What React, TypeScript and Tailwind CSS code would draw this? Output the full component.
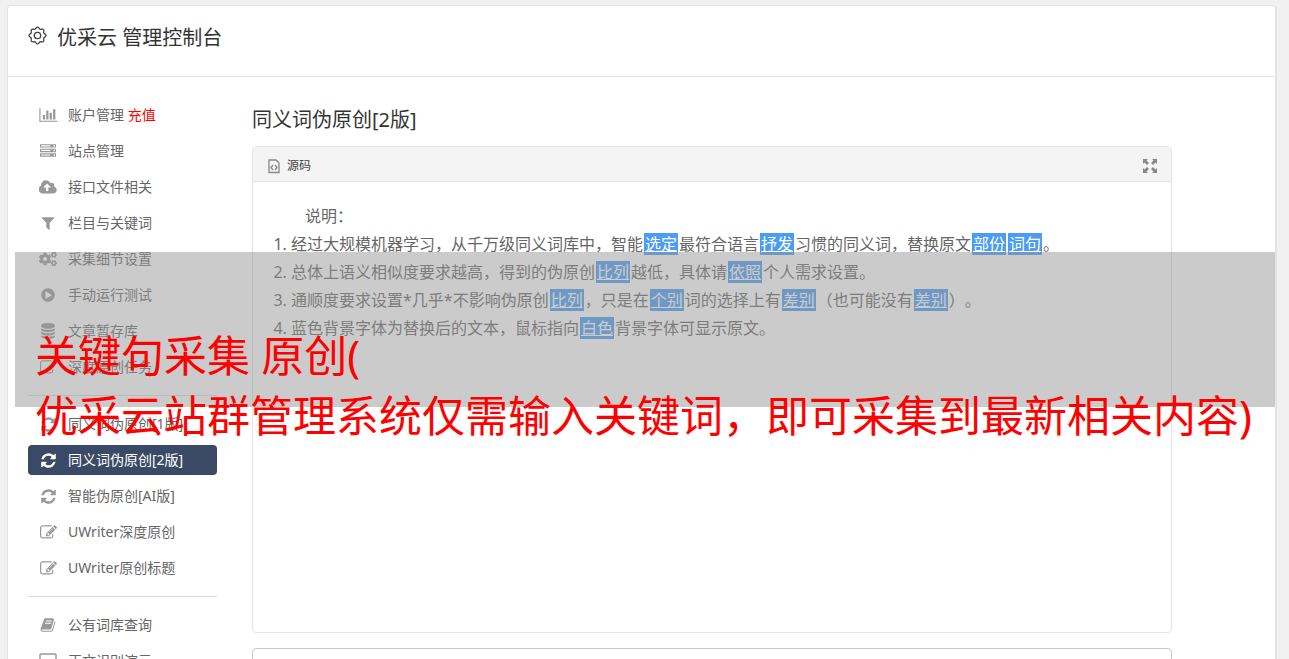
import type { ReactNode } from 'react';
import { FaCogs, FaPlayCircle } from 'react-icons/fa';

interface GlyphProps {
  d: string;
  viewBox?: string;
  width?: number;
  height?: number;
}

function Glyph({ d, viewBox = '0 0 1792 1792', width = 17, height = 17 }: GlyphProps) {
  return (
    <svg viewBox={viewBox} width={width} height={height} fill="currentColor" aria-hidden="true">
      <path d={d} />
    </svg>
  );
}

const paths = {
  chart:
    'M640 896v512h-256v-512h256zm384-512v1024h-256v-1024h256zm1024 1152v128h-2048v-1536h128v1408h1920zm-640-896v768h-256v-768h256zm384-384v1152h-256v-1152h256z',
  server:
    'M128 1408h1024v-128h-1024v128zm0-512h1024v-128h-1024v128zm1568 448q0-40-28-68t-68-28-68 28-28 68 28 68 68 28 68-28 28-68zm-1568-960h1024v-128h-1024v128zm1568 448q0-40-28-68t-68-28-68 28-28 68 28 68 68 28 68-28 28-68zm0-512q0-40-28-68t-68-28-68 28-28 68 28 68 68 28 68-28 28-68zm96 832v384h-1792v-384h1792zm0-512v384h-1792v-384h1792zm0-512v384h-1792v-384h1792z',
  cloud:
    'M1216 864q0-14-9-23l-352-352q-9-9-23-9t-23 9l-351 351q-10 12-10 24 0 14 9 23t23 9h224v352q0 13 9.5 22.5t22.5 9.5h192q13 0 22.5-9.5t9.5-22.5v-352h224q13 0 22.5-9.5t9.5-22.5zm640 288q0 159-112.5 271.5t-271.5 112.5h-1088q-185 0-316.5-131.5t-131.5-316.5q0-130 70-240t188-165q-2-30-2-43 0-212 150-362t362-150q156 0 285.5 87t188.5 231q71-62 166-62 106 0 181 75t75 181q0 76-41 138 130 31 213.5 135.5t83.5 238.5z',
  filter:
    'M1595 295q17 41-14 70l-493 493v742q0 42-39 59-13 5-25 5-27 0-45-19l-256-256q-19-19-19-45v-486l-493-493q-31-29-14-70 17-39 59-39h1280q42 0 59 39z',
  database:
    'M896 768q237 0 443-43t325-127v170q0 69-103 128t-280 93.5-385 34.5-385-34.5-280-93.5-103-128v-170q119 84 325 127t443 43zm0 768q237 0 443-43t325-127v170q0 69-103 128t-280 93.5-385 34.5-385-34.5-280-93.5-103-128v-170q119 84 325 127t443 43zm0-384q237 0 443-43t325-127v170q0 69-103 128t-280 93.5-385 34.5-385-34.5-280-93.5-103-128v-170q119 84 325 127t443 43zm0-1152q208 0 385 34.5t280 93.5 103 128v128q0 69-103 128t-280 93.5-385 34.5-385-34.5-280-93.5-103-128v-128q0-69 103-128t280-93.5 385-34.5z',
  edit:
    'M888 1184l116-116-152-152-116 116v56h96v96h56zm440-720q-16-16-33 1l-350 350q-17 17-1 33t33-1l350-350q17-17 1-33zm80 594v190q0 119-84.5 203.5t-203.5 84.5h-832q-119 0-203.5-84.5t-84.5-203.5v-832q0-119 84.5-203.5t203.5-84.5h832q63 0 117 25 15 7 18 23 3 17-9 29l-49 49q-14 14-32 8-23-6-45-6h-832q-66 0-113 47t-47 113v832q0 66 47 113t113 47h832q66 0 113-47t47-113v-126q0-13 9-22l64-64q15-15 35-7t20 29zm-96-738l288 288-672 672h-288v-288zm444 132l-92 92-288-288 92-92q28-28 68-28t68 28l152 152q28 28 28 68t-28 68z',
  refresh:
    'M1639 1056q0 5-1 7-64 268-268 434.5t-478 166.5q-146 0-282.5-55t-243.5-157l-129 129q-19 19-45 19t-45-19-19-45v-448q0-26 19-45t45-19h448q26 0 45 19t19 45-19 45l-137 137q71 66 161 102t187 36q134 0 250-65t186-179q11-17 53-117 8-23 30-23h192q13 0 22.5 9.5t9.5 22.5zm25-800v448q0 26-19 45t-45 19h-448q-26 0-45-19t-19-45 19-45l138-138q-148-137-349-137-134 0-250 65t-186 179q-11 17-53 117-8 23-30 23h-199q-13 0-22.5-9.5t-9.5-22.5v-7q65-268 270-434.5t480-166.5q146 0 284 55.5t245 156.5l130-129q19-19 45-19t45 19 19 45z',
  book:
    'M1703 478q40 57 18 129l-275 906q-19 64-76.5 107.5t-122.5 43.5h-923q-77 0-148.5-53.5t-99.5-131.5q-24-67-2-127 0-4 3-27t4-37q1-8-3-21.5t-3-19.5q2-11 8-21t16.5-23.5 16.5-23.5q23-38 45-91.5t30-91.5q3-10 .5-30t-.5-28q3-11 17-28t17-23q21-36 42-92t25-90q1-9-2.5-32t.5-28q4-13 22-30.5t22-22.5q19-26 42.5-84.5t27.5-96.5q1-8-3-25.5t-2-26.5q2-8 9-18t18-23 17-21q8-12 16.5-30.5t15-35 16-36 19.5-32 26.5-23.5 36-11.5 47.5 5.5l-1 3q38-9 51-9h761q74 0 114 56t18 130l-274 906q-36 119-71.5 153.5t-128.5 34.5h-869q-27 0-38 15-11 16-1 43 24 70 144 70h923q29 0 56-15.5t35-41.5l300-987q7-22 5-57 38 15 59 43zm-1064 2q-4 13 2 22.5t20 9.5h608q13 0 25.5-9.5t16.5-22.5l21-64q4-13-2-22.5t-20-9.5h-608q-13 0-25.5 9.5t-16.5 22.5zm-83 256q-4 13 2 22.5t20 9.5h608q13 0 25.5-9.5t16.5-22.5l21-64q4-13-2-22.5t-20-9.5h-608q-13 0-25.5 9.5t-16.5 22.5z',
};

interface NavItem {
  label: string;
  icon: ReactNode;
  note?: string;
  active?: boolean;
}

const refresh = <Glyph d={paths.refresh} />;
const edit = <Glyph d={paths.edit} />;

const navGroups: NavItem[][] = [
  [
    {
      label: '账户管理',
      note: '充值',
      icon: <Glyph d={paths.chart} viewBox="0 0 2048 1792" width={19} height={16} />,
    },
    { label: '站点管理', icon: <Glyph d={paths.server} width={16} height={16} /> },
    { label: '接口文件相关', icon: <Glyph d={paths.cloud} viewBox="-32 0 1920 1792" width={18} height={17} /> },
    { label: '栏目与关键词', icon: <Glyph d={paths.filter} width={16} height={16} /> },
    { label: '采集细节设置', icon: <FaCogs size={18} /> },
    { label: '手动运行测试', icon: <FaPlayCircle size={14} /> },
    { label: '文章暂存库', icon: <Glyph d={paths.database} width={16} height={16} /> },
    { label: '深度原创任务', icon: edit },
  ],
  [
    { label: '同义词伪原创[1版]', icon: refresh },
    { label: '同义词伪原创[2版]', icon: refresh, active: true },
    { label: '智能伪原创[AI版]', icon: refresh },
    { label: 'UWriter深度原创', icon: edit },
    { label: 'UWriter原创标题', icon: edit },
  ],
  [
    { label: '公有词库查询', icon: <Glyph d={paths.book} width={16} height={16} /> },
    {
      label: '正文识别演示',
      icon: (
        <svg width="18" height="16" fill="none" stroke="currentColor" strokeWidth="1.5" aria-hidden="true">
          <rect x="1" y="1" width="16" height="11" rx="1" />
          <path d="M6 15h6" />
        </svg>
      ),
    },
  ],
];

function GearIcon() {
  const points = Array.from({ length: 96 }, (_, i) => {
    const a = (i / 96) * Math.PI * 2;
    const r = 7.6 + 0.8 * Math.cos(a * 8);
    return `${(9.5 + r * Math.cos(a)).toFixed(2)},${(9.5 + r * Math.sin(a)).toFixed(2)}`;
  }).join(' ');
  return (
    <svg width="19" height="19" fill="none" stroke="#444" strokeWidth="1.3" strokeLinejoin="round" aria-hidden="true">
      <polygon points={points} />
      <circle cx="9.5" cy="9.5" r="3.2" />
    </svg>
  );
}

function Swap({ children }: { children: ReactNode }) {
  return <span className="mx-px bg-[#4a9cf5] px-px text-white underline">{children}</span>;
}

function Sidebar() {
  return (
    <nav className="w-[189px] shrink-0 divide-y divide-[#dcdcdc]">
      {navGroups.map((group, i) => (
        <ul key={i} className="flex flex-col gap-[6px] py-[13px] first:pt-0">
          {group.map((item) => (
            <li key={item.label}>
              <a
                href="#"
                className={
                  item.active
                    ? 'flex h-[30px] items-center gap-[10px] rounded bg-[#3a4a66] px-[10px] text-white'
                    : 'flex h-[30px] items-center gap-[10px] rounded px-[10px] text-[#666]'
                }
              >
                <span className={item.active ? 'flex w-5 justify-center' : 'flex w-5 justify-center text-[#999]'}>
                  {item.icon}
                </span>
                <span>
                  {item.label}
                  {item.note && <span className="text-[#f00]"> {item.note}</span>}
                </span>
              </a>
            </li>
          ))}
        </ul>
      ))}
    </nav>
  );
}

function Editor() {
  return (
    <section className="h-[487px] rounded border border-[#e4e4e4]">
      <div className="flex h-[35px] items-center justify-between rounded-t border-b border-[#e4e4e4] bg-[#f4f4f4] px-[14px] pt-[3px]">
        <button type="button" className="flex items-center gap-[6px] text-xs text-[#444]">
          <svg width="14" height="16" fill="none" stroke="#888" strokeWidth="1.3" aria-hidden="true">
            <path d="M2 2h7l3 3v9.5H2z" />
            <path d="M6 7L4 9.500l2 2.500M8 7l2 2.500L8 12" />
          </svg>
          源码
        </button>
        <button type="button" aria-label="全屏">
          <svg width="14" height="14" viewBox="0 0 14 14" fill="#888" aria-hidden="true">
            <path d="M0 0h5L3.500 1.500 6 4 4 6 1.500 3.500 0 5z" />
            <path d="M14 0v5l-1.500-1.500L10 6 8 4l2.500-2.500L9 0z" />
            <path d="M0 14V9l1.500 1.500L4 8l2 2-2.500 2.500L5 14z" />
            <path d="M14 14H9l1.500-1.500L8 10l2-2 2.500 2.500L14 9z" />
          </svg>
        </button>
      </div>
      <div className="px-5 py-5 text-base leading-7 text-[#666]">
        <p className="indent-8">说明：</p>
        <ol className="list-decimal pl-[18px]">
          <li>
            经过大规模机器学习，从千万级同义词库中，智能<Swap>选定</Swap>最符合语言<Swap>抒发</Swap>
            习惯的同义词，替换原文<Swap>部份</Swap><Swap>词句</Swap>。
          </li>
          <li>
            总体上语义相似度要求越高，得到的伪原创<Swap>比列</Swap>越低，具体请<Swap>依照</Swap>个人需求设置。
          </li>
          <li>
            通顺度要求设置*几乎*不影响伪原创<Swap>比列</Swap>，只是在<Swap>个别</Swap>词的选择上有
            <Swap>差别</Swap>（也可能没有<Swap>差别</Swap>）。
          </li>
          <li>
            蓝色背景字体为替换后的文本，鼠标指向<Swap>白色</Swap>背景字体可显示原文。
          </li>
        </ol>
      </div>
    </section>
  );
}

export default function App() {
  return (
    <div className="relative h-screen overflow-hidden bg-[#f1f1f1] pt-[5px] pr-3 pl-[7px] font-['Noto_Sans','Noto_Sans_CJK_SC',sans-serif] text-sm [text-spacing-trim:space-all]">
      <div className="rounded border border-r-2 border-[#e4e4e4] bg-white">
        <header className="flex h-[71px] items-start gap-[10px] border-b border-[#e4e4e4] px-5 pt-5">
          <GearIcon />
          <h1 className="text-xl leading-6 text-[#333]">优采云 管理控制台</h1>
        </header>
        <div className="flex gap-[35px] pt-[23px] pr-[103px] pl-5">
          <Sidebar />
          <main className="min-w-0 flex-1">
            <h2 className="mt-[5px] mb-[11px] text-xl leading-[30px] text-[#333]">同义词伪原创[2版]</h2>
            <Editor />
            <textarea
              aria-label="原文"
              className="mt-[15px] block h-40 w-full resize-none rounded border border-[#c8c8c8]"
            />
          </main>
        </div>
      </div>

      {/* Caption band over the page */}
      <div className="absolute right-[14px] left-[15px] top-[252px] h-[155px] bg-[#949494]/49 px-5 pt-[74px] text-[43px] leading-[60px] whitespace-nowrap text-[#f00]">
        <p>关键句采集 原创(</p>
        <p>优采云站群管理系统仅需输入关键词，即可采集到最新相关内容)</p>
      </div>
    </div>
  );
}
